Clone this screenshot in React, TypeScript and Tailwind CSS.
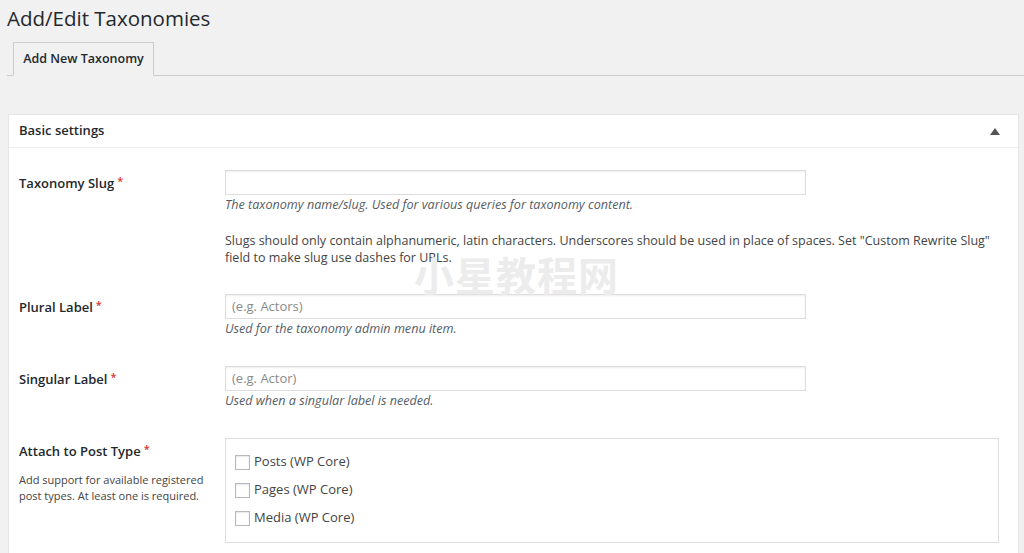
import React from "react";

const font = { fontFamily: '"Open Sans", "Noto Sans", "Noto Sans CJK SC", sans-serif' };

function Req() {
  return <span className="text-[#dc3232] ml-[3px] relative -top-[3px] text-[11px]">*</span>;
}

function Label({ children, sub }: { children: React.ReactNode; sub?: React.ReactNode }) {
  return (
    <div className="w-[206px] shrink-0 pt-[5px]">
      <div className="text-[13px] leading-[16px] font-semibold text-[#23282d]">
        {children}
        <Req />
      </div>
      {sub}
    </div>
  );
}

function TextInput({ placeholder }: { placeholder?: string }) {
  return (
    <div className="w-[581px] h-[25px] border border-[#ddd] shadow-[inset_0_1px_2px_rgba(0,0,0,0.07)] bg-white flex items-center px-[6px] text-[13px] text-[#8a8a8a]">
      {placeholder}
    </div>
  );
}

function Help({ children }: { children: React.ReactNode }) {
  return <div className="mt-[2px] text-[12.6px] leading-[16px] italic text-[#555d66]">{children}</div>;
}

function Check({ label }: { label: string }) {
  return (
    <div className="flex items-center h-[28px]">
      <div className="w-[15px] h-[15px] border border-[#b4b9be] bg-white shadow-[inset_0_1px_2px_rgba(0,0,0,0.1)]" />
      <span className="ml-[4px] text-[13px] text-[#444]">{label}</span>
    </div>
  );
}

export default function App() {
  return (
    <div className="w-[1024px] h-[553px] bg-[#f1f1f1] overflow-hidden relative text-[#23282d]" style={font}>
      <h1 className="pl-[7px] pt-[3px] text-[20.5px] leading-[30px] font-normal text-[#23282d]">Add/Edit Taxonomies</h1>
      <div className="mt-[9px] ml-[7px] border-b border-[#ccc] h-[34px] flex items-end">
        <div className="ml-[6px] h-[34px] w-[141px] border border-[#ccc] border-b-[#f1f1f1] -mb-px bg-[#f1f1f1] flex items-center justify-center text-[12.5px] font-semibold text-[#23282d]">
          Add New Taxonomy
        </div>
      </div>
      <div className="ml-[8px] mt-[38px] w-[1011px] bg-white border border-[#e5e5e5] shadow-[0_1px_1px_rgba(0,0,0,0.04)]">
        <div className="h-[33px] border-b border-[#eee] flex items-center justify-between pl-[10px] pr-[18px]">
          <span className="text-[13px] font-semibold">Basic settings</span>
          <svg width="10" height="7" viewBox="0 0 10 7">
            <polygon points="5,0 10,7 0,7" fill="#555" />
          </svg>
        </div>
        <div className="pl-[10px]">
          <div className="flex pt-[22px]">
            <Label>Taxonomy Slug</Label>
            <div>
              <TextInput />
              <Help>The taxonomy name/slug. Used for various queries for taxonomy content.</Help>
              <p className="mt-[19px] text-[12.5px] leading-[17px] text-[#444] w-[770px]">
                Slugs should only contain alphanumeric, latin characters. Underscores should be used in place of spaces. Set "Custom Rewrite Slug" field to make slug use dashes for URLs.
              </p>
            </div>
          </div>
          <div className="flex pt-[28px]">
            <Label>Plural Label</Label>
            <div>
              <TextInput placeholder="(e.g. Actors)" />
              <Help>Used for the taxonomy admin menu item.</Help>
            </div>
          </div>
          <div className="flex pt-[29px]">
            <Label>Singular Label</Label>
            <div>
              <TextInput placeholder="(e.g. Actor)" />
              <Help>Used when a singular label is needed.</Help>
            </div>
          </div>
          <div className="flex pt-[29px] pb-[12px]">
            <Label
              sub={
                <div className="mt-[12px] text-[11px] leading-[16px] text-[#444] w-[190px]">
                  Add support for available registered post types. At least one is required.
                </div>
              }
            >
              Attach to Post Type
            </Label>
            <div className="w-[774px] h-[105px] border border-[#ddd] pl-[9px] pt-[9px]">
              <Check label="Posts (WP Core)" />
              <Check label="Pages (WP Core)" />
              <Check label="Media (WP Core)" />
            </div>
          </div>
        </div>
      </div>
      <div
        className="absolute left-[414px] top-[250px] text-[40px] leading-[48px] font-bold text-[#ececec] pointer-events-none tracking-[1px]"
        style={{ fontFamily: '"Noto Sans CJK SC", sans-serif' }}
      >
        小星教程网
      </div>
    </div>
  );
}
